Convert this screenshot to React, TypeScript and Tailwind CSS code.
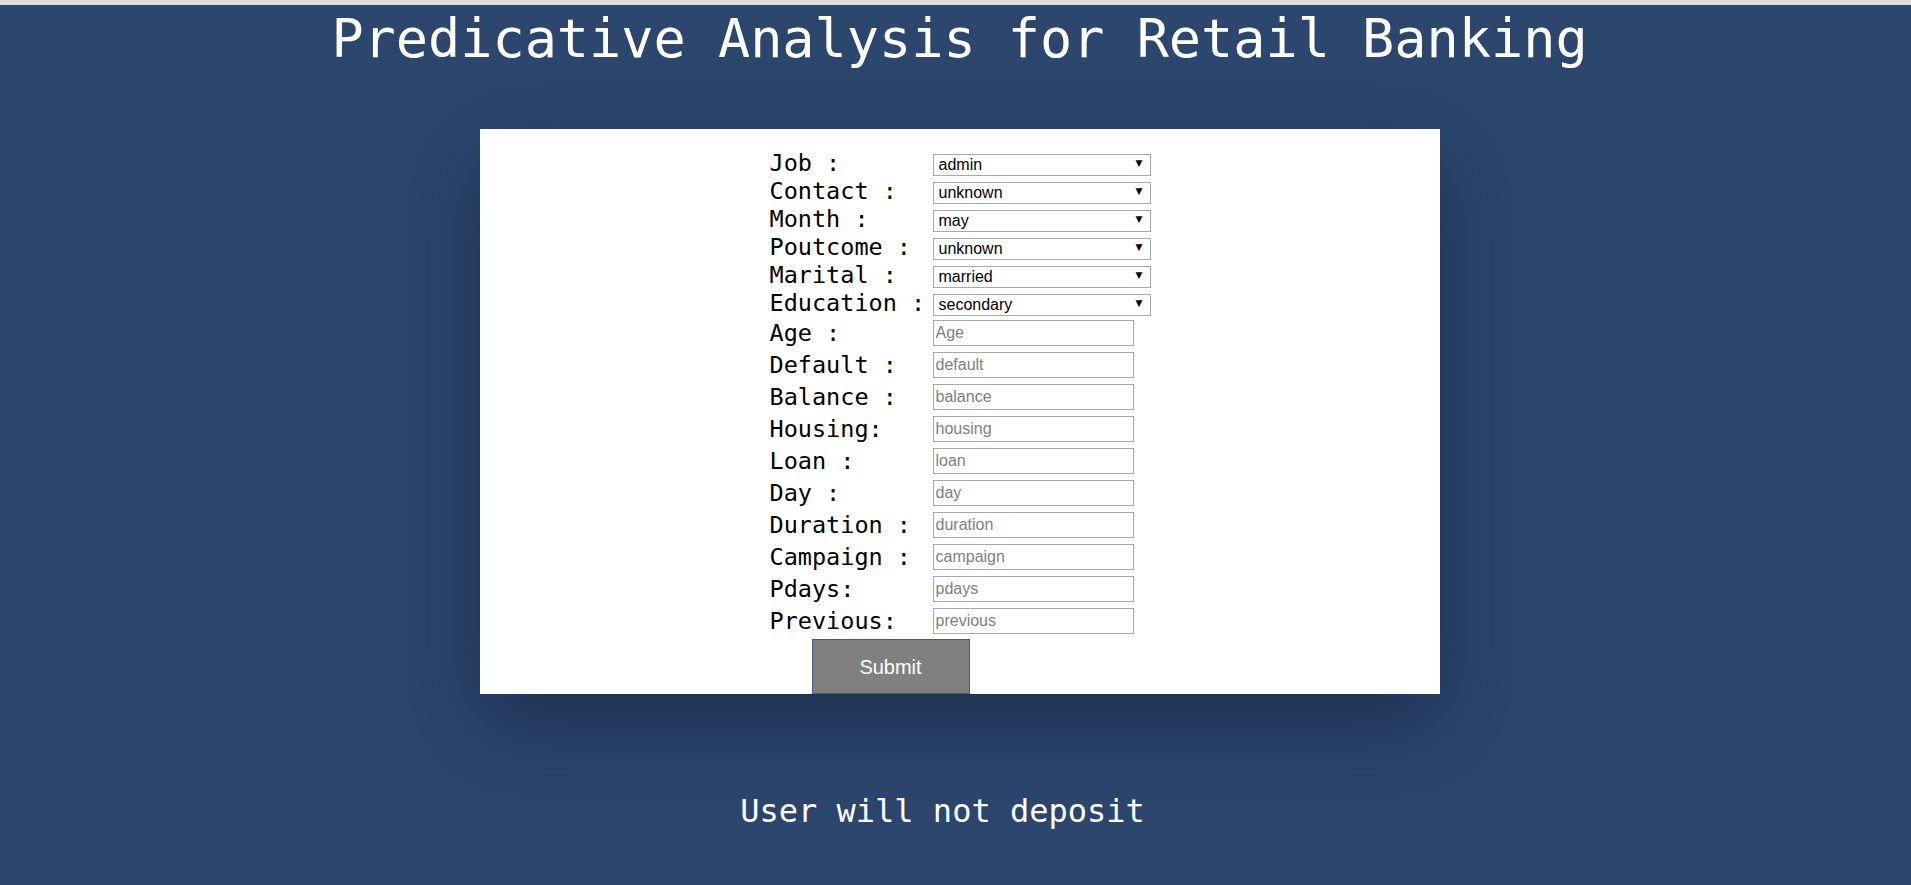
import { useState } from 'react';

const selectFields = [
  { label: 'Job :', name: 'job', value: 'admin', options: ['admin', 'blue-collar', 'entrepreneur', 'housemaid', 'management', 'retired', 'self-employed', 'services', 'student', 'technician', 'unemployed', 'unknown'] },
  { label: 'Contact :', name: 'contact', value: 'unknown', options: ['unknown', 'cellular', 'telephone'] },
  { label: 'Month :', name: 'month', value: 'may', options: ['jan', 'feb', 'mar', 'apr', 'may', 'jun', 'jul', 'aug', 'sep', 'oct', 'nov', 'dec'] },
  { label: 'Poutcome :', name: 'poutcome', value: 'unknown', options: ['unknown', 'failure', 'other', 'success'] },
  { label: 'Marital :', name: 'marital', value: 'married', options: ['married', 'single', 'divorced'] },
  { label: 'Education :', name: 'education', value: 'secondary', options: ['primary', 'secondary', 'tertiary', 'unknown'] },
];

const inputFields = [
  { label: 'Age :', placeholder: 'Age' },
  { label: 'Default :', placeholder: 'default' },
  { label: 'Balance :', placeholder: 'balance' },
  { label: 'Housing:', placeholder: 'housing' },
  { label: 'Loan :', placeholder: 'loan' },
  { label: 'Day :', placeholder: 'day' },
  { label: 'Duration :', placeholder: 'duration' },
  { label: 'Campaign :', placeholder: 'campaign' },
  { label: 'Pdays:', placeholder: 'pdays' },
  { label: 'Previous:', placeholder: 'previous' },
];

const mono = "[font-family:'DejaVu_Sans_Mono','Liberation_Mono',monospace]";

function SelectRow({ field }: { field: (typeof selectFields)[number] }) {
  const [value, setValue] = useState(field.value);
  return (
    <div className="flex h-[22px] items-center">
      <label className={`w-[163px] shrink-0 pt-[2px] text-[23.5px] leading-none whitespace-pre text-black ${mono}`}>
        {field.label}
      </label>
      <div className="relative h-[22px] w-[218px]">
        <select
          name={field.name}
          value={value}
          onChange={(e) => setValue(e.target.value)}
          className="h-full w-full appearance-none rounded-none border border-[#a9a9a9] bg-white pl-[5px] text-[16px] leading-[20px] text-black outline-none [font-family:'Liberation_Sans',Arial,sans-serif]"
        >
          {field.options.map((o) => (
            <option key={o} value={o}>
              {o}
            </option>
          ))}
        </select>
        <span className="pointer-events-none absolute right-[8px] top-[4px] text-[9px] leading-[14px] text-black [font-family:'DejaVu_Sans',sans-serif]">
          ▼
        </span>
      </div>
    </div>
  );
}

export default function App() {
  return (
    <div className="min-h-screen bg-[#2d466e]">
      <div className="h-[5px] bg-[#dedede]" />
      <h1 className={`m-0 mt-[3px] pl-[8px] text-center text-[53.5px] leading-[62px] font-normal text-white ${mono}`}>
        Predicative Analysis for Retail Banking
      </h1>

      <div className="ml-[480px] mt-[59px] w-[960px] bg-white pt-[23px] shadow-[0_30px_80px_rgba(10,20,40,0.45)]">
        <form className="mx-auto flex w-[381px] flex-col gap-[6px]" onSubmit={(e) => e.preventDefault()}>
          {selectFields.map((f) => (
            <SelectRow key={f.name} field={f} />
          ))}
          {inputFields.map((f) => (
            <div key={f.placeholder} className="flex h-[26px] items-center">
              <label className={`w-[163px] shrink-0 pt-[2px] text-[23.5px] leading-none whitespace-pre text-black ${mono}`}>
                {f.label}
              </label>
              <input
                type="text"
                placeholder={f.placeholder}
                className="h-[26px] w-[201px] border border-[#a9a9a9] bg-white px-[2px] text-[16px] text-black outline-none placeholder:text-[#808080] [font-family:'Liberation_Sans',Arial,sans-serif]"
              />
            </div>
          ))}
          <button
            type="submit"
            className="-mt-[1px] ml-[42px] h-[55px] w-[158px] border border-[#3f5a8f] bg-[#808080] text-[20px] text-white [font-family:'Liberation_Sans',Arial,sans-serif]"
          >
            Submit
          </button>
        </form>
      </div>

      <p className={`mt-[99px] pr-[26px] text-center text-[32px] leading-[36px] text-white ${mono}`}>
        User will not deposit
      </p>
    </div>
  );
}
